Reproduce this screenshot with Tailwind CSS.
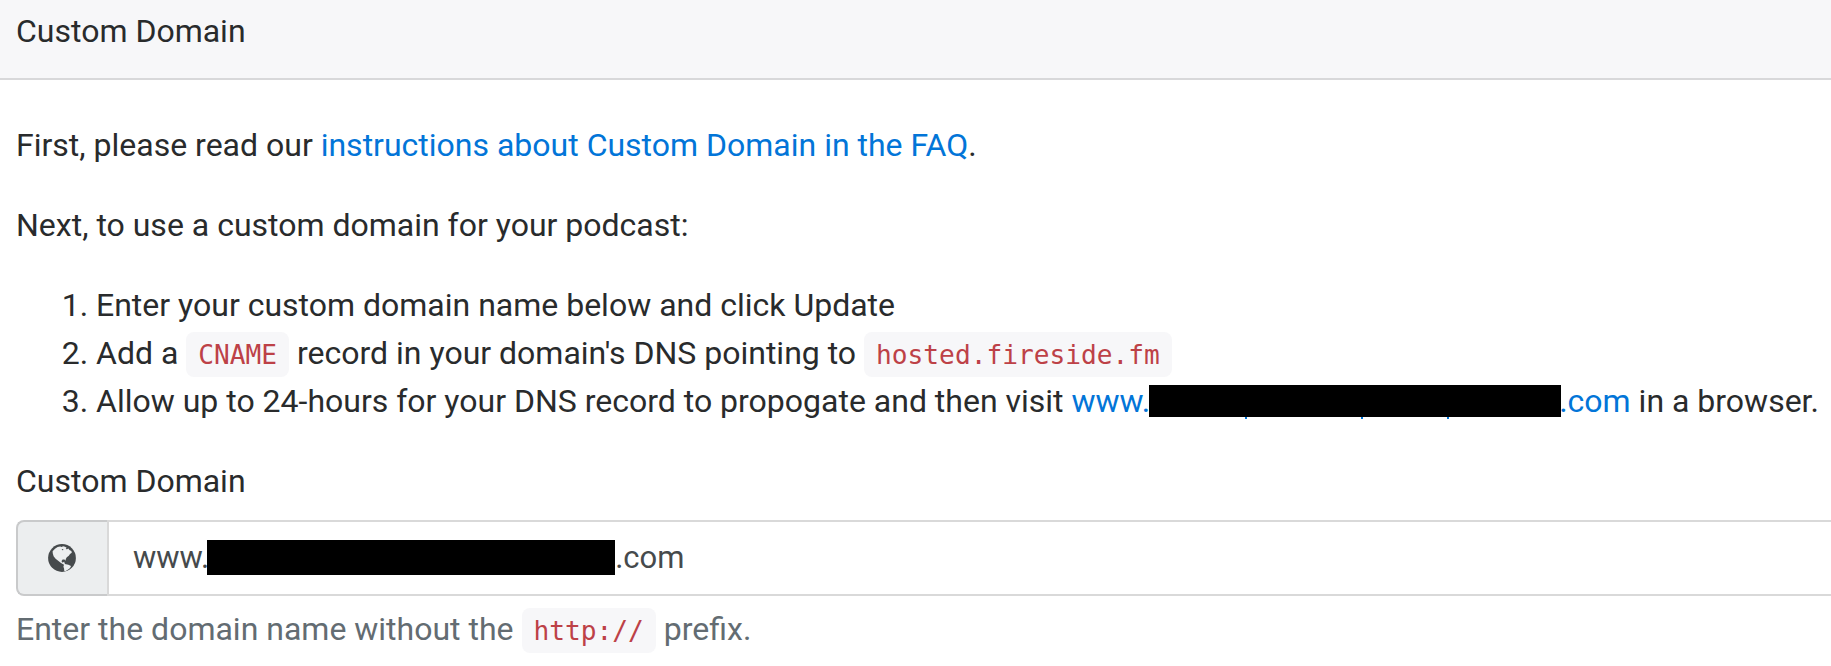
<!DOCTYPE html>
<html lang="en">
<head>
<meta charset="utf-8">
<title>Custom Domain</title>
<script src="https://cdn.jsdelivr.net/npm/@tailwindcss/browser@4"></script>
</head>
<body class="bg-white overflow-hidden font-['Roboto',sans-serif] text-[32px] leading-[48px] text-[#292b2c]">
<div class="w-[1831px] h-[666px] overflow-hidden">
  <header class="bg-[#f7f7f9] border-b-2 border-[#d8d8da] pt-[7px] pb-[23px] pl-4">Custom Domain</header>
  <main class="pt-[41px] pl-4 whitespace-nowrap">
    <p class="mb-8">First, please read our <a class="text-[#0275d8]">instructions about Custom Domain in the FAQ</a>.</p>
    <p class="mb-8">Next, to use a custom domain for your podcast:</p>
    <ol class="list-decimal pl-20 mb-8">
      <li class="h-12">Enter your custom domain name below and click Update</li>
      <li class="h-12">Add a <code class="font-['DejaVu_Sans_Mono',monospace] text-[26.2px] leading-none text-[#bd4147] bg-[#f7f7f9] rounded-lg px-3 pt-2 pb-[7px]">CNAME</code> record in your domain's DNS pointing to <code class="font-['DejaVu_Sans_Mono',monospace] text-[26.2px] leading-none text-[#bd4147] bg-[#f7f7f9] rounded-lg px-3 pt-2 pb-[7px]">hosted.fireside.fm</code></li>
      <li class="h-12">Allow up to 24-hours for your DNS record to propogate and then visit <a class="text-[#0275d8]">www.<span class="relative inline-block w-[412px] h-8 bg-black align-[-5px] -ml-px -mr-[2px]"><i class="absolute left-[96px] top-8 w-[2px] h-[2px] bg-[#0275d8]"></i><i class="absolute left-[212px] top-8 w-[2px] h-[2px] bg-[#0275d8]"></i><i class="absolute left-[298px] top-8 w-[2px] h-[2px] bg-[#0275d8]"></i></span>.com</a> in a browser.</li>
    </ol>
    <label class="block mb-[15px]">Custom Domain</label>
    <div class="flex h-[76px]">
      <div class="w-[91px] pr-px flex items-center justify-center bg-[#eceeef] border-2 border-r-0 border-[#c9cacb] rounded-l-lg">
        <svg class="w-7 h-7" viewBox="0 0 28 28">
          <circle cx="14" cy="14" r="13.9" fill="#464a4c"/>
          <path fill="#eceeef" d="M4.600 7.200L7 4.700 9.600 3l2.600-.4 1.600.5 1.200-.9 2 .6 1.600.9-.8 1.200 1.200.4 1.400-.8 1 1.600 2 1 .4 1.600-1.800 1.300-1.200 1.800-2 1.400-1 1.700-.3 1.800-1-1.300-1.900.2-1 1.400.4 1.500 1.500-.2.600-.8.500 1.700.9 1.300 1.100.8-.9.500-2.100-1.200-2.600-1.500-1.900-1.600L7.600 14.800 5.600 12.200 4.800 9.600z"/>
          <path fill="#eceeef" d="M16 20.700l2-.5 2.400.5 2.600 1.300-.9 2-1.900 1.600-2.500 1.300-1.400.2-.3-2.800-.6-1.600z"/>
          <path fill="#464a4c" d="M13.600 5.400l1.300-.4.6.9-1.100.4z"/>
        </svg>
      </div>
      <div class="flex-1 border-2 border-r-0 border-[#d9d9d9] pl-6 flex items-center text-[31px] text-[#464a4c]">www.<span class="w-[408px] h-[35px] bg-black -ml-[2px] mr-0 -mt-px"></span>.com</div>
    </div>
    <p class="mt-[9px] text-[#636c72]">Enter the domain name without the <code class="font-['DejaVu_Sans_Mono',monospace] text-[26.2px] leading-none text-[#bd4147] bg-[#f7f7f9] rounded-lg px-3 pt-2 pb-[7px]">http://</code> prefix.</p>
  </main>
</div>
</body>
</html>
